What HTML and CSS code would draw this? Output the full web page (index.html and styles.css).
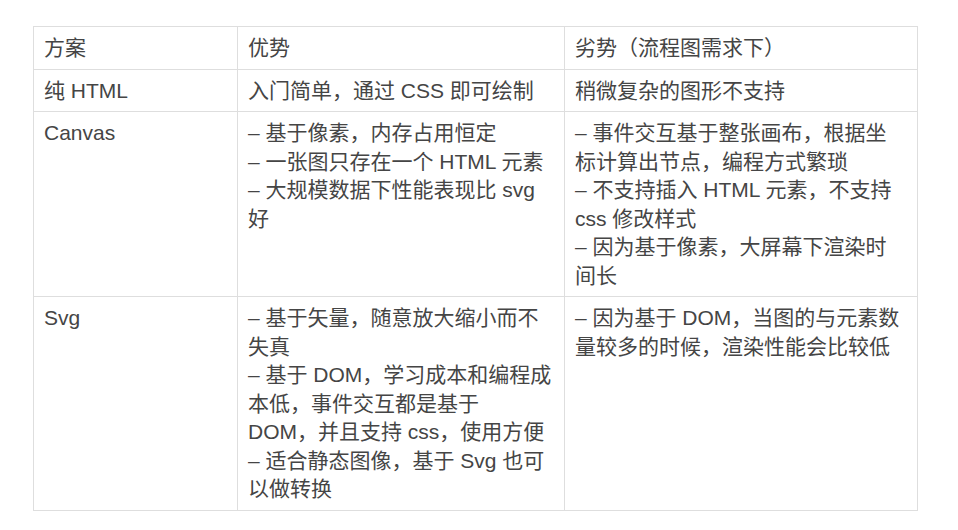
FILE: index.html
```html
<!DOCTYPE html>
<html lang="zh-CN">
<head>
<meta charset="utf-8">
<title>方案对比</title>
<link rel="stylesheet" href="styles.css">
</head>
<body>
<div class="page">
  <table class="compare">
    <colgroup>
      <col class="c1">
      <col class="c2">
      <col class="c3">
    </colgroup>
    <thead>
      <tr><th>方案</th><th>优势</th><th>劣势（流程图需求下）</th></tr>
    </thead>
    <tbody>
      <tr>
        <td>纯 HTML</td>
        <td>入门简单，通过 CSS 即可绘制</td>
        <td>稍微复杂的图形不支持</td>
      </tr>
      <tr>
        <td>Canvas</td>
        <td>– 基于像素，内存占用恒定<br>– 一张图只存在一个 HTML 元素<br>– 大规模数据下性能表现比 svg 好</td>
        <td>– 事件交互基于整张画布，根据坐标计算出节点，编程方式繁琐<br>– 不支持插入 HTML 元素，不支持 css 修改样式<br>– 因为基于像素，大屏幕下渲染时间长</td>
      </tr>
      <tr>
        <td>Svg</td>
        <td>– 基于矢量，随意放大缩小而不失真<br>– 基于 DOM，学习成本和编程成本低，事件交互都是基于 DOM，并且支持 css，使用方便<br>– 适合静态图像，基于 Svg 也可以做转换</td>
        <td>– 因为基于 DOM，当图的与元素数量较多的时候，渲染性能会比较低</td>
      </tr>
    </tbody>
  </table>
</div>
</body>
</html>
```

FILE: styles.css
```css
html, body {
  margin: 0;
  padding: 0;
  background: #ffffff;
}

.page {
  padding: 26px 0 0 33px;
}

.compare {
  border-collapse: collapse;
  table-layout: fixed;
  width: 884px;
  font-family: "Liberation Sans", "Noto Sans CJK SC", sans-serif;
  font-size: 21px;
  line-height: 28.5px;
  color: #454545;
}

.c1 { width: 204px; }
.c2 { width: 327px; }
.c3 { width: 353px; }

.compare th,
.compare td {
  border: 1px solid #dedede;
  padding: 7px 11px 6px 10px;
  text-align: left;
  vertical-align: top;
  font-weight: normal;
}
```
